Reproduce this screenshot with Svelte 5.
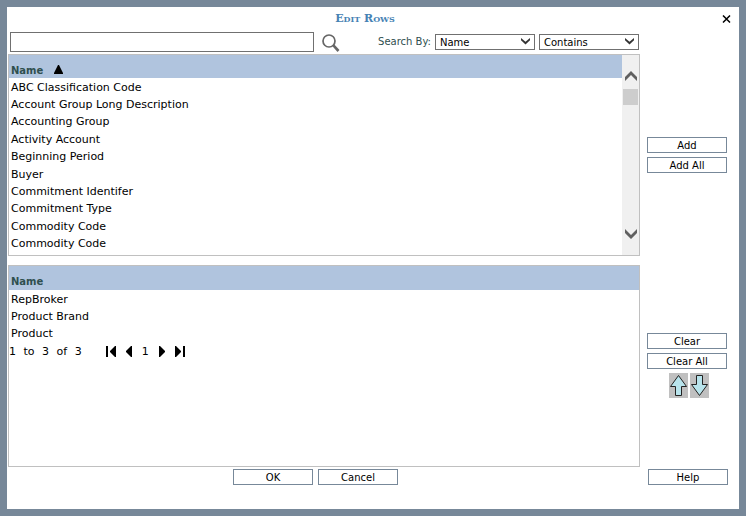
<script lang="ts">
  let search = $state('');
  let searchBy = $state('Name');
  let matchType = $state('Contains');

  const available = [
    'ABC Classification Code',
    'Account Group Long Description',
    'Accounting Group',
    'Activity Account',
    'Beginning Period',
    'Buyer',
    'Commitment Identifer',
    'Commitment Type',
    'Commodity Code',
    'Commodity Code',
  ];
  const selected = ['RepBroker', 'Product Brand', 'Product'];
</script>

{#snippet chevron()}
  <svg class="chevron" width="9" height="7" viewBox="0 0 9 7">
    <path d="M0 0 4.500 3.800 9 0V2.300L4.500 6.500 0 2.300Z" fill="#333" />
  </svg>
{/snippet}

<div class="dialog">
  <header>
    <h1>Edit Rows</h1>
    <button class="icon close" aria-label="Close">
      <svg width="9" height="8" viewBox="0 0 9 8">
        <path d="M1 .5 8 7.500M8 .5 1 7.500" stroke="#000" stroke-width="1.500" />
      </svg>
    </button>
  </header>

  <main>
    <form class="toolbar" onsubmit={(e) => e.preventDefault()}>
      <input type="text" aria-label="Search text" bind:value={search} />
      <button class="icon find" aria-label="Search">
        <svg width="18" height="18" viewBox="0 0 18 18" fill="none" stroke="#666">
          <circle cx="7" cy="7" r="6" stroke-width="1.700" />
          <path d="M11.200 11.200 16.500 17" stroke-width="2.600" />
        </svg>
      </button>
      <label for="search-by">Search By:</label>
      <div class="select">
        <select id="search-by" bind:value={searchBy}>
          <option>Name</option>
        </select>
        {@render chevron()}
      </div>
      <div class="select">
        <select aria-label="Match type" bind:value={matchType}>
          <option>Contains</option>
        </select>
        {@render chevron()}
      </div>
    </form>

    <section class="panel">
      <table class="available">
        <thead>
          <tr>
            <th>
              Name
              <svg class="sort" width="9" height="9" viewBox="0 0 9 9">
                <path d="M4 0H5L9 8V9H0V8Z" />
              </svg>
            </th>
          </tr>
        </thead>
        <tbody>
          {#each available as name}
            <tr><td>{name}</td></tr>
          {/each}
        </tbody>
      </table>
      <div class="scrollbar">
        <svg width="12" height="10" viewBox="0 0 12 10">
          <path d="M0 6 6 0 12 6V10L6 4 0 10Z" fill="#606060" />
        </svg>
        <div class="thumb"></div>
        <svg class="down" width="12" height="10" viewBox="0 0 12 10">
          <path d="M0 0 6 6 12 0V4L6 10 0 4Z" fill="#606060" />
        </svg>
      </div>
    </section>
    <div class="side">
      <button>Add</button>
      <button>Add All</button>
    </div>

    <section class="panel second">
      <div class="content">
        <table>
          <thead>
            <tr><th>Name</th></tr>
          </thead>
          <tbody>
            {#each selected as name}
              <tr><td>{name}</td></tr>
            {/each}
          </tbody>
        </table>
        <nav class="pager">
          <span class="range">1 to 3 of 3</span>
          <button class="icon" aria-label="First page">
            <svg width="10" height="11" viewBox="0 0 10 11">
              <path d="M0 0H2V11H0ZM9 0H10V11H9L4 6V5Z" />
            </svg>
          </button>
          <button class="icon" aria-label="Previous page">
            <svg width="6" height="11" viewBox="0 0 6 11"><path d="M5 0H6V11H5L0 6V5Z" /></svg>
          </button>
          <span>1</span>
          <button class="icon" aria-label="Next page">
            <svg width="6" height="11" viewBox="0 0 6 11"><path d="M1 0H0V11H1L6 6V5Z" /></svg>
          </button>
          <button class="icon" aria-label="Last page">
            <svg width="10" height="11" viewBox="0 0 10 11">
              <path d="M8 0H10V11H8ZM1 0H0V11H1L6 6V5Z" />
            </svg>
          </button>
        </nav>
      </div>
    </section>
    <div class="side">
      <button>Clear</button>
      <button>Clear All</button>
      <div class="order">
        <button class="icon move" aria-label="Move up">
          <svg width="19" height="25" viewBox="0 0 19 25">
            <path d="M9.500 2.500 17.500 13.500H12.500V22.500H6.500V13.500H1.500Z" />
          </svg>
        </button>
        <button class="icon move" aria-label="Move down">
          <svg width="19" height="25" viewBox="0 0 19 25">
            <path d="M9.500 22.500 17.500 11.500H12.500V2.500H6.500V11.500H1.500Z" />
          </svg>
        </button>
      </div>
    </div>

    <footer>
      <button>OK</button>
      <button>Cancel</button>
    </footer>
    <div class="help">
      <button>Help</button>
    </div>
  </main>
</div>

<style>
  :global(body) {
    margin: 0;
  }
  .dialog {
    box-sizing: border-box;
    min-height: 100vh;
    border: 7px solid #778899;
    background: #fff;
    font: 10px/14px Verdana, 'DejaVu Sans', sans-serif;
    color: #000;
  }
  header {
    display: grid;
    grid-template-columns: 1fr 16px;
    align-items: center;
    height: 24px;
    padding: 0 5px;
  }
  h1 {
    margin: 0;
    font: bold 11px/16px 'DejaVu Serif', serif;
    font-variant: small-caps;
    text-align: center;
    color: #4682b4;
  }
  button {
    box-sizing: border-box;
    width: 80px;
    height: 16px;
    padding: 1px 0 0;
    border: 1px solid #778899;
    background: #fff;
    font: inherit;
    color: #000;
  }
  .icon {
    display: flex;
    align-items: center;
    justify-content: center;
    width: auto;
    height: auto;
    padding: 0;
    border: none;
    background: none;
  }
  main {
    display: grid;
    grid-template-columns: 1fr 80px;
    column-gap: 7px;
    padding: 0 12px 0 1px;
  }
  .toolbar {
    grid-column: 1;
    display: flex;
    align-items: center;
    gap: 4px;
    height: 22px;
    padding: 0 1px 1px 2px;
  }
  .toolbar input {
    box-sizing: border-box;
    flex: 1;
    min-width: 0;
    height: 20px;
    padding: 0 4px;
    border: 1px solid #707070;
    font: inherit;
  }
  .find {
    padding: 2px 34px 0 4px;
  }
  label {
    color: #2f4f4f;
  }
  .select {
    position: relative;
    width: 100px;
  }
  select {
    display: block;
    box-sizing: border-box;
    width: 100%;
    height: 16px;
    padding: 1px 16px 0 4px;
    border: 1px solid #707070;
    border-radius: 0;
    appearance: none;
    background: #fff;
    font: inherit;
    color: #000;
  }
  .chevron {
    position: absolute;
    top: 4px;
    right: 5px;
    pointer-events: none;
  }
  .panel {
    grid-column: 1;
    display: flex;
    min-height: 200px;
    border: 1px solid #c0c0c0;
  }
  .second {
    margin-top: 9px;
  }
  .content {
    flex: 1;
  }
  table {
    width: 100%;
    border-collapse: collapse;
  }
  .available {
    flex: 1;
    height: 197px;
  }
  th {
    height: 23px;
    padding: 0 2px;
    background: #b0c4de;
    text-align: left;
    vertical-align: bottom;
    color: #2f4f4f;
  }
  .second th {
    height: 23px;
    padding-bottom: 1px;
  }
  .sort {
    margin-left: 7px;
  }
  td {
    height: 15px;
    padding: 2px 2px 0;
    font-size: 11px;
  }
  .scrollbar {
    display: flex;
    flex-direction: column;
    align-items: center;
    width: 17px;
    padding: 16px 0;
    background: #f0f0f0;
  }
  .thumb {
    width: 15px;
    height: 16px;
    margin-top: 8px;
    background: #cdcdcd;
  }
  .down {
    margin-top: auto;
  }
  .pager {
    display: flex;
    align-items: center;
    gap: 10px;
    height: 17px;
    padding-top: 2px;
    font-size: 11px;
  }
  .range {
    margin-right: 14px;
    word-spacing: 4px;
  }
  .side {
    display: flex;
    flex-direction: column;
    justify-content: center;
    gap: 4px;
  }
  .second + .side {
    margin-top: 8px;
  }
  .order {
    display: flex;
    gap: 2px;
    padding-left: 22px;
  }
  .move {
    background: #c0c0c0;
  }
  .move path {
    fill: #b8e4ec;
    stroke: #222;
  }
  footer {
    display: flex;
    justify-content: center;
    gap: 5px;
    padding: 2px 17px 0 0;
  }
  .help {
    padding: 2px 0 0 1px;
  }
</style>
